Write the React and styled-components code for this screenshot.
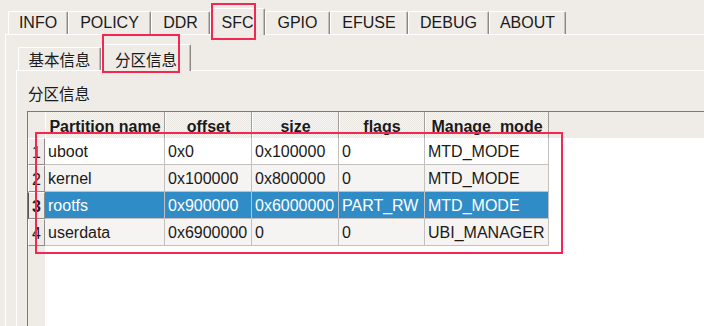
import styled, { createGlobalStyle } from "styled-components"

const GlobalStyle = createGlobalStyle`
  html, body {
    margin: 0;
    padding: 0;
    background: #EFEBE7;
  }
  body {
    font-family: "Liberation Sans", Arial, "Noto Sans CJK SC", sans-serif;
    font-size: 16px;
    color: #1a1a1a;
  }
`

const Window = styled.div`
  position: relative;
  width: 704px;
  height: 326px;
  overflow: hidden;
  box-sizing: border-box;
  padding: 8px 0 0 5px;
  display: flex;
  flex-direction: column;
  background: #EFEBE7;
`

const TabBar = styled.div`
  display: flex;
  align-items: flex-end;
  height: 26px;
  padding-left: ${p => p.$inset}px;
  position: relative;
  z-index: 1;
`

const Tab = styled.div`
  box-sizing: border-box;
  width: ${p => p.$w}px;
  height: ${p => (p.$active ? 27 : 23)}px;
  margin-bottom: ${p => (p.$active ? -1 : 0)}px;
  display: flex;
  align-items: center;
  justify-content: center;
  padding-top: ${p => (p.$active ? 2 : 0)}px;
  background: #EFEBE7;
  border-top: 1px solid #fff;
  border-left: 1px solid #fff;
  border-right: 1px solid #8a8784;
  box-shadow: inset -1px 0 0 #c2bfbb;
  border-radius: 2px 2px 0 0;
  font-family: ${p => (p.$cjk ? '"Noto Sans CJK SC", sans-serif' : '"Liberation Sans", Arial, sans-serif')};
  font-size: ${p => (p.$cjk ? 15.5 : 16)}px;
  white-space: nowrap;
`

const Panel = styled.div`
  flex: 1;
  display: flex;
  flex-direction: column;
  border-top: 1px solid #fff;
  border-left: 1px solid #fff;
  padding: 9px 0 0 10px;
  min-height: 0;
`

const InnerPanel = styled.div`
  flex: 1;
  display: flex;
  flex-direction: column;
  border-top: 1px solid #fff;
  border-left: 1px solid #fff;
  padding: 12px 0 0 10px;
  min-height: 0;
`

const GroupLabel = styled.div`
  height: 20px;
  line-height: 20px;
  padding-left: 1px;
  font-family: "Noto Sans CJK SC", sans-serif;
  font-size: 15.5px;
  margin-bottom: 8px;
`

const Table = styled.div`
  flex: 1;
  display: grid;
  grid-template-columns: 17px 120px 87px 87px 86px 124px 1fr;
  grid-template-rows: 26px repeat(4, 27px) 1fr;
  border-top: 1px solid #7c7a77;
  border-left: 1px solid #7c7a77;
  background: #fff;
`

const Corner = styled.div`
  background: #EFEBE7;
`

const HeadCell = styled.div`
  box-sizing: border-box;
  display: flex;
  align-items: center;
  justify-content: center;
  padding-top: 3px;
  font-weight: bold;
  font-size: 16px;
  white-space: nowrap;
  overflow: hidden;
  background: repeating-conic-gradient(#f7f6f4 0 25%, #e9e6e2 0 50%) 0 0 / 2px 2px;
  border-left: 1px solid #fff;
  border-right: 1px solid #a09d9a;
`

const HeadFill = styled.div`
  background: #EFEBE7;
`

const RowHead = styled.div`
  box-sizing: border-box;
  display: flex;
  align-items: center;
  justify-content: center;
  padding-top: 2px;
  background: #EFEBE7;
  border-top: 1px solid #fff;
  border-left: 1px solid ${p => (p.$active ? "#555" : "#fff")};
  border-right: 1px solid #8f8c89;
  border-bottom: 1px solid #8f8c89;
  font-weight: ${p => (p.$active ? "bold" : "normal")};
  font-size: 16px;
`

const Cell = styled.div`
  box-sizing: border-box;
  display: flex;
  align-items: center;
  padding: 2px 0 0 3px;
  white-space: nowrap;
  overflow: hidden;
  font-size: 16px;
  background: ${p => (p.$active ? "#308cc6" : p.$alt ? "#f6f4f2" : "#fff")};
  color: ${p => (p.$active ? "#fff" : "#1a1a1a")};
  border-right: 1px solid #c3c0bd;
  border-bottom: 1px solid #c3c0bd;
`

const RowFill = styled.div`
  background: #fff;
`

const SideFill = styled.div`
  background: #EFEBE7;
`

const BodyFill = styled.div`
  grid-column: 2 / -1;
  background: #fff;
`

const Mark = styled.div`
  position: absolute;
  left: ${p => p.$x}px;
  top: ${p => p.$y}px;
  width: ${p => p.$w}px;
  height: ${p => p.$h}px;
  box-sizing: border-box;
  border: 2px solid #f3274f;
  pointer-events: none;
  z-index: 5;
`

const mainTabs = [
  ["INFO", 60],
  ["POLICY", 83],
  ["DDR", 59],
  ["SFC", 55],
  ["GPIO", 65],
  ["EFUSE", 78],
  ["DEBUG", 81],
  ["ABOUT", 77],
]

const subTabs = [
  ["基本信息", 83],
  ["分区信息", 90],
]

const columns = ["Partition name", "offset", "size", "flags", "Manage_mode"]

const partitions = [
  ["uboot", "0x0", "0x100000", "0", "MTD_MODE"],
  ["kernel", "0x100000", "0x800000", "0", "MTD_MODE"],
  ["rootfs", "0x900000", "0x6000000", "PART_RW", "MTD_MODE"],
  ["userdata", "0x6900000", "0", "0", "UBI_MANAGER"],
]

export default function App() {
  return (
    <>
      <GlobalStyle />
      <Window>
        <TabBar $inset={3}>
          {mainTabs.map(([name, w]) => (
            <Tab key={name} $w={w} $active={name === "SFC"}>{name}</Tab>
          ))}
        </TabBar>
        <Panel>
          <TabBar $inset={2}>
            {subTabs.map(([name, w], i) => (
              <Tab key={name} $w={w} $active={i === 1} $cjk>{name}</Tab>
            ))}
          </TabBar>
          <InnerPanel>
            <GroupLabel>分区信息</GroupLabel>
            <Table>
              <Corner />
              {columns.map(c => <HeadCell key={c}>{c}</HeadCell>)}
              <HeadFill />
              {partitions.map((row, i) => {
                const active = i === 2
                const alt = i % 2 === 1
                return [
                  <RowHead key={"h" + i} $active={active}>{i + 1}</RowHead>,
                  ...row.map((v, j) => (
                    <Cell key={i + "-" + j} $active={active} $alt={alt}>{v}</Cell>
                  )),
                  <RowFill key={"f" + i} />,
                ]
              })}
              <SideFill />
              <BodyFill />
            </Table>
          </InnerPanel>
        </Panel>
        <Mark $x={211} $y={3} $w={45} $h={37} />
        <Mark $x={102} $y={34} $w={78} $h={39} />
        <Mark $x={35} $y={132} $w={528} $h={122} />
      </Window>
    </>
  )
}
